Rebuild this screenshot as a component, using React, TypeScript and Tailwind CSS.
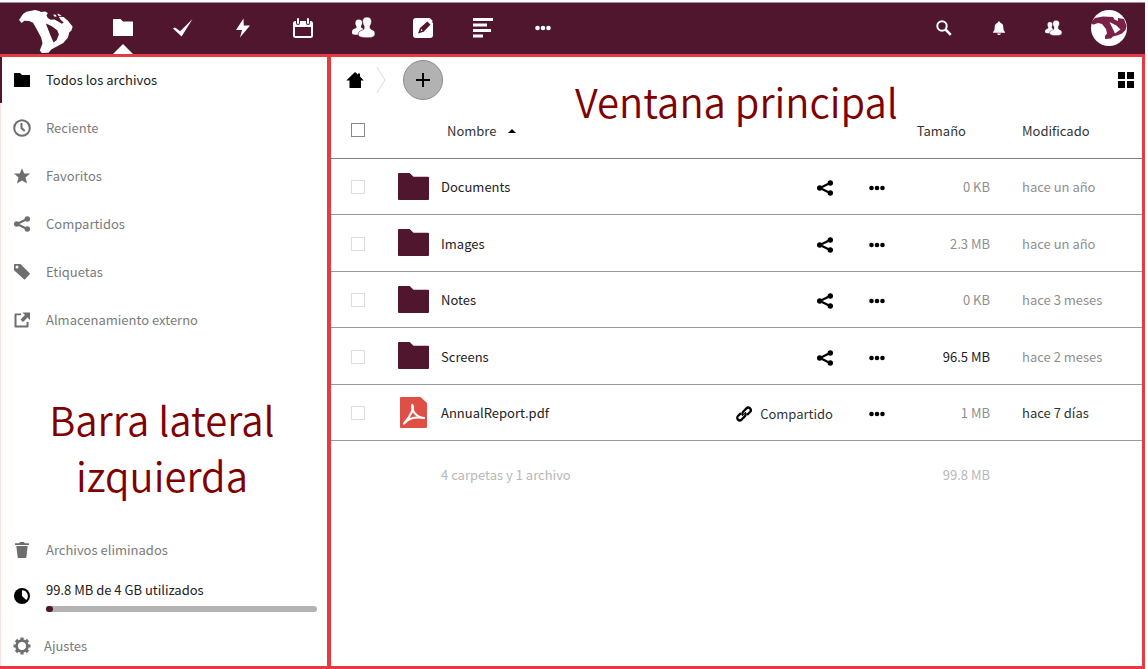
import type { ReactNode } from 'react';

type IconProps = { className?: string };

const Folder = ({ className }: IconProps) => (
  <svg viewBox="0 0 16 14" className={className} fill="currentColor" preserveAspectRatio="none">
    <path d="M.5 0H6l2 2h7.5q.5 0 .5.5v11q0 .5-.5.5H.5q-.5 0-.5-.5V.5Q0 0 .5 0z" />
  </svg>
);
const Check = () => (
  <svg viewBox="0 0 20 18" className="h-[18px] w-5" fill="currentColor">
    <path d="M0 9.500 2 8.600l5.200 3.600L19.500 0 8.600 17.400z" />
  </svg>
);
const Bolt = () => (
  <svg viewBox="0 0 14 20" className="h-5 w-3.5" fill="currentColor">
    <path d="M7.500.5 0 12h6L4 19.500 14 7.500H7.800z" />
  </svg>
);
const Calendar = () => (
  <svg viewBox="0 0 20 20" className="size-5" fill="currentColor">
    <path
      fillRule="evenodd"
      d="M2.500 3H3v2a2 2 0 0 0 4 0V3h6v2a2 2 0 0 0 4 0V3h.5A2.500 2.500 0 0 1 20 5.500v12A2.500 2.500 0 0 1 17.500 20h-15A2.500 2.500 0 0 1 0 17.500v-12A2.500 2.500 0 0 1 2.500 3zM2 9v8.500q0 .5.5.5h15q.5 0 .5-.5V9z"
    />
    <rect x="4" y="0" width="2" height="6" rx="1" />
    <rect x="14" y="0" width="2" height="6" rx="1" />
  </svg>
);
const People = ({ className }: IconProps) => (
  <svg viewBox="0 0 23 21" className={className} fill="currentColor">
    <path d="M6.800 2.500c2.200 0 3.400 1.500 3.200 3.500-.1 1.600-.7 2.400-1 3.200 0 1.500 1 2 2 2.500v6H3C1 17.500.2 17 0 16c-.1-3 .8-3.800 3.200-4.500 1.200-.4 1.500-1.200 1.200-2.300-.6-.8-1-1.700-1-3.200 0-2 1.100-3.500 3.400-3.500z" />
    <path
      stroke="#50162d"
      strokeWidth=".6"
      d="M15 0c3 0 4.700 2 4.500 4.800-.1 2-.9 3.200-1.500 4.200-.2 2.400.5 3.200 2 3.700 2.200.7 3 2 3 4.500-.3 2.600-3 3.600-8 3.600-5.600 0-8.700-1.200-8.800-3.300 0-2.600 1.600-3.600 4.200-4.400 1.700-.6 2-1.700 1.700-4.100-.8-1.100-1.500-2.300-1.600-4.200C10.400 2 12.200 0 15 0z"
    />
  </svg>
);
const Note = () => (
  <svg viewBox="0 0 20 20" className="size-5" fill="currentColor">
    <rect width="20" height="20" rx="3" />
    <path d="M17.500 0h2.500v5l-2-1.800-2-1.800z" fill="#50162d" />
    <path d="M17.300.4 19.800 3 18 4.800 15.400 2.300z" fill="#fff" />
    <path d="m14.300 3.500 3.200 3.100-6.800 7.200-5.700 1.800 2-5.700z" fill="#50162d" />
    <path d="m8.300 11 1.300 1.300-1.900.9z" />
  </svg>
);
const Lines = () => (
  <svg viewBox="0 0 20 20" className="size-5" fill="currentColor">
    <path d="M0 0h20v3H0zM0 5.500h14v3H0zM0 11h18v3H0zM0 16.500h10v3H0z" />
  </svg>
);
const Dots = () => (
  <svg viewBox="0 0 16 16" className="size-4" fill="currentColor">
    <circle cx="2.500" cy="8" r="2.300" />
    <circle cx="8" cy="8" r="2.300" />
    <circle cx="13.500" cy="8" r="2.300" />
  </svg>
);
const Search = () => (
  <svg viewBox="0 0 16 16" className="size-4" fill="none" stroke="currentColor">
    <circle cx="6" cy="6" r="4.700" strokeWidth="2" />
    <path d="m9.500 9.500 5.300 5.300" strokeWidth="2.500" />
  </svg>
);
const Bell = () => (
  <svg viewBox="0 0 16 16" className="size-4" fill="currentColor">
    <path d="M8 1.500c.8 0 1.300.5 1.300 1.200 2 .6 3 2.300 3 4.300 0 3 .7 4 1.700 5v.8H2V12c1-1 1.700-2 1.700-5 0-2 1-3.700 3-4.300C6.700 2 7.200 1.500 8 1.500zM6 13.500h4Q9.500 15 8 15t-2-1.500z" />
  </svg>
);
const Clock = () => (
  <svg viewBox="0 0 18 18" className="size-[18px]" fill="none" stroke="currentColor">
    <circle cx="9" cy="9" r="7.800" strokeWidth="2" />
    <path d="M8.500 4v5l3.200 3" strokeWidth="2" />
  </svg>
);
const Star = () => (
  <svg viewBox="0 0 16 16" className="size-4" fill="currentColor">
    <path d="m8 .2 2.200 5.400H16l-4.500 4 1.600 6L8 12.400l-5.100 3.200 1.600-6-4.500-4h5.800z" />
  </svg>
);
const Share = () => (
  <svg viewBox="0 0 16 16" className="size-4" fill="currentColor">
    <path d="M13 3 3 8l10 5" fill="none" stroke="currentColor" strokeWidth="2.200" />
    <circle cx="13.300" cy="3" r="2.700" />
    <circle cx="2.700" cy="8" r="2.700" />
    <circle cx="13.300" cy="13" r="2.700" />
  </svg>
);
const Tag = () => (
  <svg viewBox="0 0 16 16" className="size-4" fill="currentColor">
    <path
      fillRule="evenodd"
      d="M.6 0h5.800L15.700 9.200q.5.500 0 1L11 15.200q-.5.500-1 0L.3 6.500Q0 6.200 0 5.800V.6Q0 0 .6 0zM3 1.500a1.500 1.500 0 1 0 0 3 1.500 1.500 0 1 0 0-3z"
    />
  </svg>
);
const External = () => (
  <svg viewBox="0 0 16 16" className="size-4" fill="currentColor">
    <path d="M7 1.500v1.700H2.500v10.300h10V10h2v4.500q0 1-1 1h-12q-1 0-1-1v-12q0-1 1-1z" />
    <path d="M8.500.5H16V8l-2.500-2.500L9 10 6.500 7.500 11 3z" />
  </svg>
);
const Trash = () => (
  <svg viewBox="0 0 16 16" className="size-4" fill="currentColor">
    <path d="M6 0h4l.8 1.200h3.700q.5 0 .5.500V3H1V1.700q0-.5.500-.5h3.700zM2.300 4h11.400l-1.400 11.500q0 .5-.5.500H4.200q-.5 0-.5-.5z" />
  </svg>
);
const Quota = () => (
  <svg viewBox="0 0 16 16" className="size-4">
    <circle cx="8" cy="8" r="8" fill="currentColor" />
    <path d="M8 2.200a5.800 5.800 0 0 1 4.300 9.700L8 8z" fill="#fff" />
  </svg>
);
const Gear = () => (
  <svg viewBox="0 0 18 18" className="size-[18px]" fill="none" stroke="currentColor">
    <circle cx="9" cy="9" r="5.400" strokeWidth="2.800" />
    <path
      d="M9 .5v3M9 14.500v3M.5 9h3M14.500 9h3M3 3l2.100 2.100M12.900 12.900 15 15M3 15l2.100-2.100M12.900 5.100 15 3"
      strokeWidth="3.200"
    />
  </svg>
);
const Home = () => (
  <svg viewBox="0 0 18 16" className="h-4 w-[18px]" fill="currentColor">
    <path d="M9 0l3 2.500V1.500h2V4.500L17.700 8.500H15V16H3.500V8.500H.3z" />
  </svg>
);
const LinkIcon = () => (
  <svg viewBox="0 0 16 16" className="size-4" fill="none" stroke="currentColor" strokeWidth="2.300">
    <g transform="rotate(-45 8 8)">
      <path d="M6.500 5.200H2.300a2.500 2.500 0 0 0 0 5H7A2.500 2.500 0 0 0 9.500 7.500" />
      <path d="M9.500 10.800h4.200a2.500 2.500 0 0 0 0-5H9A2.500 2.500 0 0 0 6.500 8.500" />
    </g>
  </svg>
);
const Pdf = () => (
  <svg viewBox="0 0 27 31" className="ml-0.5 h-[31px] w-[27px]">
    <path d="M1 0h19.500L27 6v24q0 1-1 1H1q-1 0-1-1V1q0-1 1-1z" fill="#de5046" />
    <path
      d="M12.300 8c1.800 3-1 10.500-8.300 18.500M12.300 8c-1 5.500 4 12.500 11.700 13M4.500 26c3.500-4 10.500-6.500 19.500-5"
      fill="none"
      stroke="#fff"
      strokeWidth="2.200"
      strokeLinecap="round"
    />
  </svg>
);
const Logo = () => (
  <svg viewBox="0 0 161 128" className="mt-1.5 mr-0.5 h-[43px] w-[54px]" fill="currentColor">
    <path
      fillRule="evenodd"
      d="M0 30 4 24 12 12 22 5 48 0 60 3 66 6 78 4 86 9 82 16 86 24 94 29 106 28 118 35 128 41 133 37 124 29 119 20 133 21 146 32 160 50 156 62 150 66 146 82 132 98 110 110 96 118 88 127 68 128 62 121 70 100 66 82 52 56 42 38 30 33 16 32 8 39zM80 40 98 48 114 60 119 73 112 90 103 97 94 76z"
    />
    <path d="M102 13l8 1 2 6-7-1zM114 10l9 4 4 4-10-1z" />
  </svg>
);
const Avatar = () => (
  <svg viewBox="0 0 36 36" className="size-9">
    <circle cx="18" cy="18" r="18" fill="#fff" />
    <path
      fillRule="evenodd"
      fill="#7b2049"
      d="M1 11 4 8 12 6.500 22 7 23.500 9.500 27 11 27 8 33 9 35.500 16 34.500 20 31 23.500 26 25.500 22 26.500 20 28.500 14 29 14 26 16 23.500 15 19 11 14 7 13 3 14.500.3 14zM18.500 12 25.500 15.500 29.500 19.500 24 23.500z"
    />
  </svg>
);

const apps: [string, ReactNode][] = [
  ['Archivos', <Folder className="h-[17px] w-5" />],
  ['Tareas', <Check />],
  ['Actividad', <Bolt />],
  ['Calendario', <Calendar />],
  ['Contactos', <People className="h-[21px] w-[23px]" />],
  ['Notas', <Note />],
  ['Tablero', <Lines />],
  ['Más aplicaciones', <Dots />],
];

const places: [string, ReactNode][] = [
  ['Todos los archivos', <Folder className="h-3.5 w-4" />],
  ['Reciente', <Clock />],
  ['Favoritos', <Star />],
  ['Compartidos', <Share />],
  ['Etiquetas', <Tag />],
  ['Almacenamiento externo', <External />],
];

const files = [
  { name: 'Documents', size: '0 KB', modified: 'hace un año' },
  { name: 'Images', size: '2.3 MB', modified: 'hace un año' },
  { name: 'Notes', size: '0 KB', modified: 'hace 3 meses' },
  { name: 'Screens', size: '96.5 MB', modified: 'hace 2 meses', large: true },
  { name: 'AnnualReport.pdf', size: '1 MB', modified: 'hace 7 días', pdf: true },
];

function TopBar() {
  return (
    <header className="flex h-[52px] items-center border-t border-[#a58d98] bg-[#50162d] text-white">
      <a href="#inicio" aria-label="Inicio" className="flex w-[93px] justify-center">
        <Logo />
      </a>
      <nav className="flex self-stretch">
        {apps.map(([label, icon], i) => (
          <a
            key={label}
            href="#app"
            aria-label={label}
            className="relative flex w-[60px] items-center justify-center pb-0.5"
          >
            {icon}
            {i === 0 && (
              <svg viewBox="0 0 20 10" className="absolute bottom-0 left-5 h-2.5 w-5" fill="currentColor">
                <path d="M0 10 10 0l10 10z" />
              </svg>
            )}
          </a>
        ))}
      </nav>
      <div className="ml-auto flex items-center pr-[18px] pb-0.5">
        <button aria-label="Buscar" className="flex w-[55px] justify-center">
          <Search />
        </button>
        <button aria-label="Notificaciones" className="flex w-[55px] justify-center">
          <Bell />
        </button>
        <button aria-label="Contactos" className="flex w-[55px] justify-center">
          <People className="h-4 w-[17px]" />
        </button>
        <button aria-label="Cuenta" className="ml-2.5">
          <Avatar />
        </button>
      </div>
    </header>
  );
}

function SideBar() {
  return (
    <aside className="flex w-[327px] shrink-0 flex-col border-l border-[#fde0e2] text-[#7b7b7b]">
      <nav className="-ml-px flex flex-col gap-0.5">
        {places.map(([label, icon], i) => (
          <a
            key={label}
            href="#lugar"
            className={
              i === 0
                ? 'flex h-[46px] items-center border-l-2 border-[#50162d] text-[#222]'
                : 'flex h-[46px] items-center border-l-2 border-transparent'
            }
          >
            <span className={i === 0 ? 'flex w-10 justify-center text-black' : 'flex w-10 justify-center text-[#6e6e6e]'}>
              {icon}
            </span>
            <span className="pl-1">{label}</span>
          </a>
        ))}
      </nav>
      <p className="flex flex-1 items-center justify-center pt-6 pr-11 pl-10 text-center text-[40px] leading-14 font-[350] text-[#800000]">
        Barra lateral izquierda
      </p>
      <a href="#eliminados" className="flex h-12 items-center">
        <span className="flex w-[41px] justify-center text-[#6e6e6e]">
          <Trash />
        </span>
        <span className="pl-1">Archivos eliminados</span>
      </a>
      <div className="flex h-[52px] items-center pb-2 text-[#222]">
        <span className="flex w-[41px] justify-center text-black">
          <Quota />
        </span>
        <div className="flex-1 pr-2.5 pl-1">
          <div className="leading-5">99.8 MB de 4 GB utilizados</div>
          <div className="mt-1.5 h-1.5 rounded-full bg-[#b3b3b3]">
            <div className="h-1.5 w-[7px] rounded-full bg-[#50162d]" />
          </div>
        </div>
      </div>
      <button className="flex h-10 items-center">
        <span className="flex w-[41px] justify-center text-[#6e6e6e]">
          <Gear />
        </span>
        <span className="pl-0.5">Ajustes</span>
      </button>
    </aside>
  );
}

function FileTable() {
  return (
    <table className="w-full table-fixed border-collapse text-left text-[#333]">
      <colgroup>
        <col className="w-[54px]" />
        <col className="w-14" />
        <col />
        <col className="w-40" />
        <col className="w-[129px]" />
        <col className="w-[120px]" />
      </colgroup>
      <thead>
        <tr className="h-[55px] border-b border-[#808080]">
          <th className="pl-5">
            <input
              type="checkbox"
              aria-label="Seleccionar todo"
              className="block size-[14px] appearance-none border border-[#888] bg-white"
            />
          </th>
          <th />
          <th className="pt-0.5 pl-1.5 font-normal" colSpan={2}>
            <button className="flex items-center gap-3">
              Nombre
              <svg viewBox="0 0 8 4" className="h-1 w-2" fill="#000">
                <path d="M0 4 4 0l4 4z" />
              </svg>
            </button>
          </th>
          <th className="pt-0.5 pr-14 text-right font-normal">Tamaño</th>
          <th className="pt-0.5 font-normal">Modificado</th>
        </tr>
      </thead>
      <tbody>
        {files.map((f) => (
          <tr key={f.name} className="h-14 border-b border-[#9a9a9a] even:h-[57px]">
            <td className="pt-0.5 pl-5">
              <input
                type="checkbox"
                aria-label={'Seleccionar ' + f.name}
                className="block size-[14px] appearance-none border border-[#ddd] bg-white"
              />
            </td>
            <td className="pl-[13px] text-[#50162d]">{f.pdf ? <Pdf /> : <Folder className="h-[27px] w-[31px]" />}</td>
            <td className="pt-0.5 text-[#222]">
              <a href="#archivo">{f.name}</a>
            </td>
            <td>
              <div className="flex items-center justify-end gap-9 pt-1 pr-2 text-black">
                <button aria-label={'Compartir ' + f.name} className="flex items-center gap-2">
                  {f.pdf ? (
                    <>
                      <LinkIcon />
                      <span className="text-[#333]">Compartido</span>
                    </>
                  ) : (
                    <Share />
                  )}
                </button>
                <button aria-label={'Acciones de ' + f.name}>
                  <Dots />
                </button>
              </div>
            </td>
            <td className={f.large ? 'pt-0.5 pr-8 text-right text-[#222]' : 'pt-0.5 pr-8 text-right text-[#8f8f8f]'}>
              {f.size}
            </td>
            <td className={f.pdf ? 'pt-0.5 text-[#333]' : 'pt-0.5 text-[#8f8f8f]'}>{f.modified}</td>
          </tr>
        ))}
      </tbody>
      <tfoot>
        <tr className="h-[70px] text-[#b8b8b8]">
          <td />
          <td />
          <td colSpan={2}>4 carpetas y 1 archivo</td>
          <td className="pr-8 text-right">99.8 MB</td>
          <td />
        </tr>
      </tfoot>
    </table>
  );
}

export default function App() {
  return (
    <div className="flex min-h-screen flex-col bg-white pt-0.5 pr-[3px] font-['Noto_Sans_CJK_SC','Noto_Sans',sans-serif] text-[13px] leading-5">
      <TopBar />
      <div className="flex flex-1 border-y-[3px] border-[#e63a42]">
        <SideBar />
        <main className="relative min-w-0 flex-1 border-r-[3px] border-l-4 border-[#e63a42]">
          <div className="flex h-[46px] items-center pr-2 pl-[15px]">
            <a href="#raiz" aria-label="Carpeta raíz">
              <Home />
            </a>
            <svg viewBox="0 0 10 28" className="ml-3 h-7 w-2.5" fill="none" stroke="#dcdcdc">
              <path d="m1 1 8 13-8 13" />
            </svg>
            <button
              aria-label="Nuevo"
              className="ml-[17px] flex size-10 items-center justify-center rounded-full border border-[#8c8c8c] bg-[#b2b2b2]"
            >
              <svg viewBox="0 0 14 14" className="size-3.5" stroke="#000" strokeWidth="2">
                <path d="M7 0v14M0 7h14" />
              </svg>
            </button>
            <button aria-label="Vista de cuadrícula" className="ml-auto">
              <svg viewBox="0 0 16 16" className="size-4">
                <path d="M0 0h7v7H0zM9 0h7v7H9zM0 9h7v7H0zM9 9h7v7H9z" />
              </svg>
            </button>
          </div>
          <p className="pointer-events-none absolute inset-x-0 top-4 text-center text-[40px] leading-14 font-[350] text-[#800000]">
            Ventana principal
          </p>
          <FileTable />
        </main>
      </div>
    </div>
  );
}
